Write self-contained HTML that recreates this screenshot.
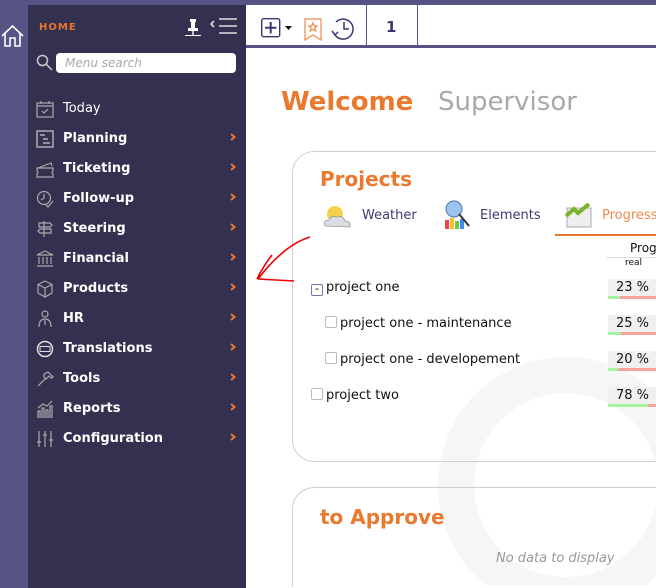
<!DOCTYPE html>
<html><head><meta charset="utf-8">
<style>
*{margin:0;padding:0;box-sizing:border-box}
body{width:656px;height:588px;overflow:hidden;background:#575385;font-family:"DejaVu Sans","Liberation Sans",sans-serif;position:relative}
.strip{position:absolute;left:0;top:0;width:28px;height:588px;background:#575385}
.side{position:absolute;left:28px;top:5px;width:218px;height:583px;background:#33314f}
.main{position:absolute;left:246px;top:5px;width:410px;height:583px;background:#fff;overflow:hidden}
.tb{position:absolute;left:0;top:0;width:410px;height:43px;border-bottom:3px solid #575385;background:#fff}
.item{position:absolute;left:35px;color:#fff;font-weight:bold;font-size:13px;height:20px;line-height:20px}
.item svg{position:absolute;left:-27px;top:1px}
.arr{position:absolute;left:201px;width:8px;height:8px}
.card{position:absolute;border:1px solid #cfcfcf;border-radius:22px;background:transparent}
.h{position:absolute;color:#e8792e;font-weight:bold;font-size:20px}
.row{position:absolute;font-size:13px;color:#111}
.cb{display:inline-block;width:12px;height:12px;border:1px solid #bbb;border-radius:2px;vertical-align:-1px;margin-right:3px}
.pct{position:absolute;left:362px;width:60px;height:20px;background:#f0f0f0;font-size:13px;line-height:18px;padding-left:8px;color:#111}
.pct i{position:absolute;left:0;bottom:0;height:3px;width:100%;background:#f7a3a0}
.pct b{position:absolute;left:0;bottom:0;height:3px;background:#a6f3a0}
</style></head><body>
<div class="strip">
<svg style="position:absolute;left:1px;top:24px" width="24" height="24" viewBox="0 0 24 24" fill="none" stroke="#fff" stroke-width="1.6"><path d="M1 12L11.5 2L22 12M4 9.5V22H9V14H14V22H19V9.5"/></svg>
</div>
<div class="side">
<div style="position:absolute;left:11px;top:17px;color:#e8742e;font-weight:bold;font-size:10px;letter-spacing:1px">HOME</div>
<svg style="position:absolute;left:157px;top:14px" width="16" height="18" viewBox="0 0 16 18" fill="#fff"><rect x="5" y="0" width="6" height="3"/><rect x="6" y="3" width="4" height="6"/><rect x="3" y="9" width="10" height="3"/><rect x="7.3" y="12" width="1.4" height="4"/><rect x="0" y="16" width="16" height="1"/></svg>
<svg style="position:absolute;left:181px;top:12px" width="30" height="20" viewBox="0 0 30 20" fill="none" stroke="#fff" stroke-width="1.3"><path d="M5 4L2 7L5 10M10 2H28M10 9H28M10 16H28"/></svg>
<svg style="position:absolute;left:8px;top:49px" width="18" height="18" viewBox="0 0 18 18" fill="none" stroke="#ccc" stroke-width="1.5"><circle cx="6.5" cy="6.5" r="5"/><path d="M10 10L16 16"/></svg>
<div style="position:absolute;left:28px;top:48px;width:180px;height:20px;background:#fff;border-radius:4px;color:#aaa;font-style:italic;font-size:12px;line-height:21px;padding-left:9px">Menu search</div>

<div class="item" style="top:94px;font-weight:normal"><svg width="18" height="18" viewBox="0 0 18 18" fill="none" stroke="#aaa" stroke-width="1.2"><rect x="1" y="3" width="16" height="14"/><path d="M1 6H17M5 1V4M13 1V4M6 11L8 13L12 9"/></svg>Today</div>
<div class="item" style="top:124px"><svg width="18" height="18" viewBox="0 0 18 18" fill="none" stroke="#ccc" stroke-width="1.2"><rect x="1" y="1" width="16" height="16"/><path d="M4 5H9M7 9H12M7 13H14"/></svg>Planning</div>
<div class="item" style="top:154px"><svg width="18" height="18" viewBox="0 0 18 18" fill="none" stroke="#aaa" stroke-width="1.2"><path d="M1 8H17V11Q15 12.5 17 14V17H1V14Q3 12.5 1 11Z M2 8L15 3L16 6"/></svg>Ticketing</div>
<div class="item" style="top:184px"><svg width="18" height="18" viewBox="0 0 18 18" fill="none" stroke="#aaa" stroke-width="1.2"><circle cx="8" cy="8" r="6.5"/><path d="M8 4V8L5 10M10 15L12 17L17 11"/></svg>Follow-up</div>
<div class="item" style="top:214px"><svg width="18" height="18" viewBox="0 0 18 18" fill="none" stroke="#aaa" stroke-width="1.2"><path d="M8 1V17M3 3H14L16 5L14 7H3ZM15 9H4L2 11L4 13H15Z"/></svg>Steering</div>
<div class="item" style="top:244px"><svg width="18" height="18" viewBox="0 0 18 18" fill="none" stroke="#aaa" stroke-width="1.2"><path d="M1 5L9 1L17 5ZM3 7V14M7 7V14M11 7V14M15 7V14M1 16H17"/></svg>Financial</div>
<div class="item" style="top:274px"><svg width="18" height="18" viewBox="0 0 18 18" fill="none" stroke="#aaa" stroke-width="1.2"><path d="M9 1L16 4.5V13L9 17L2 13V4.5ZM2 4.5L9 8L16 4.5M9 8V17"/></svg>Products</div>
<div class="item" style="top:304px"><svg width="18" height="18" viewBox="0 0 18 18" fill="none" stroke="#aaa" stroke-width="1.2"><circle cx="9" cy="4" r="3"/><path d="M3 17Q3 9 9 9Q15 9 15 17M9 10V15"/></svg>HR</div>
<div class="item" style="top:334px"><svg width="18" height="18" viewBox="0 0 18 18" fill="none" stroke="#ddd" stroke-width="1.5"><circle cx="9" cy="9" r="7.5"/><rect x="4" y="6.5" width="10" height="5" stroke-width="1"/></svg>Translations</div>
<div class="item" style="top:364px"><svg width="18" height="18" viewBox="0 0 18 18" fill="none" stroke="#aaa" stroke-width="1.2"><path d="M2 16L10 8M8 4L12 2L17 7L15 8L13 6L10 9L8 7Z"/></svg>Tools</div>
<div class="item" style="top:394px"><svg width="18" height="18" viewBox="0 0 18 18" fill="none" stroke="#aaa" stroke-width="1.2"><path d="M1 17H17M2 16V11H4V16M6 16V8H8V16M10 16V10H12V16M14 16V6H16V16M2 8L7 4L11 6L16 1"/></svg>Reports</div>
<div class="item" style="top:424px"><svg width="18" height="18" viewBox="0 0 18 18" fill="none" stroke="#aaa" stroke-width="1.2"><path d="M3 1V17M9 1V17M15 1V17M1 12H5M7 5H11M13 10H17"/></svg>Configuration</div>
<svg class="arr" style="top:128px" viewBox="0 0 8 8"><path d="M2 1L5.5 4L2 7" stroke="#e8742e" stroke-width="2" fill="none"/></svg>
<svg class="arr" style="top:158px" viewBox="0 0 8 8"><path d="M2 1L5.5 4L2 7" stroke="#e8742e" stroke-width="2" fill="none"/></svg>
<svg class="arr" style="top:188px" viewBox="0 0 8 8"><path d="M2 1L5.5 4L2 7" stroke="#e8742e" stroke-width="2" fill="none"/></svg>
<svg class="arr" style="top:218px" viewBox="0 0 8 8"><path d="M2 1L5.5 4L2 7" stroke="#e8742e" stroke-width="2" fill="none"/></svg>
<svg class="arr" style="top:248px" viewBox="0 0 8 8"><path d="M2 1L5.5 4L2 7" stroke="#e8742e" stroke-width="2" fill="none"/></svg>
<svg class="arr" style="top:278px" viewBox="0 0 8 8"><path d="M2 1L5.5 4L2 7" stroke="#e8742e" stroke-width="2" fill="none"/></svg>
<svg class="arr" style="top:308px" viewBox="0 0 8 8"><path d="M2 1L5.5 4L2 7" stroke="#e8742e" stroke-width="2" fill="none"/></svg>
<svg class="arr" style="top:338px" viewBox="0 0 8 8"><path d="M2 1L5.5 4L2 7" stroke="#e8742e" stroke-width="2" fill="none"/></svg>
<svg class="arr" style="top:368px" viewBox="0 0 8 8"><path d="M2 1L5.5 4L2 7" stroke="#e8742e" stroke-width="2" fill="none"/></svg>
<svg class="arr" style="top:398px" viewBox="0 0 8 8"><path d="M2 1L5.5 4L2 7" stroke="#e8742e" stroke-width="2" fill="none"/></svg>
<svg class="arr" style="top:428px" viewBox="0 0 8 8"><path d="M2 1L5.5 4L2 7" stroke="#e8742e" stroke-width="2" fill="none"/></svg>
</div>

<div class="main">
<div class="tb">
<svg style="position:absolute;left:15px;top:13px" width="36" height="20" viewBox="0 0 36 20"><rect x="0.7" y="0.7" width="18" height="18" rx="2" fill="none" stroke="#3b3670" stroke-width="1.4"/><path d="M9.7 4V15.4M4 9.7H15.4" stroke="#3b3670" stroke-width="2"/><path d="M24 8H31L27.5 12Z" fill="#111"/></svg>
<svg style="position:absolute;left:58px;top:13px" width="18" height="24" viewBox="0 0 18 24" fill="none" stroke="#f08a4c" stroke-width="1.2"><path d="M1 1H17V22L9 17L1 22Z"/><path d="M9 5L10.3 8H13L11 10L11.8 13L9 11.3L6.2 13L7 10L5 8H7.7Z"/></svg>
<svg style="position:absolute;left:85px;top:11px" width="24" height="26" viewBox="0 0 24 26" fill="none" stroke="#3b3670" stroke-width="1.5"><path d="M4 19A10 10 0 1 0 5 6"/><path d="M1 15L4 19L7 16M13 6V13H18"/></svg>
<div style="position:absolute;left:120px;top:0;width:1px;height:43px;background:#575385"></div>
<div style="position:absolute;left:171px;top:0;width:1px;height:43px;background:#575385"></div>
<div style="position:absolute;left:140px;top:13px;font-weight:bold;font-size:15px;color:#3b3670">1</div>
</div>
<svg style="position:absolute;left:170px;top:330px" width="240" height="250" viewBox="0 0 240 250"><circle cx="150" cy="150" r="110" fill="none" stroke="#f6f6f6" stroke-width="36"/></svg>
<div style="position:absolute;left:35px;top:82px;font-size:26px;font-weight:bold;color:#e8792e">Welcome</div>
<div style="position:absolute;left:192px;top:82px;font-size:26px;color:#a8a8a8">Supervisor</div>

<div class="card" style="left:46px;top:146px;width:420px;height:311px">
<div class="h" style="left:27px;top:15px">Projects</div>
<svg style="position:absolute;left:28px;top:50px" width="32" height="30" viewBox="0 0 32 30"><circle cx="14" cy="12" r="8" fill="#f5d04a"/><path d="M4 24Q2 18 8 18Q10 13 16 15Q22 13 24 19Q30 19 29 25Z" fill="#d8dde4" stroke="#999" stroke-width="0.8"/></svg>
<div style="position:absolute;left:69px;top:56px;font-size:13px;color:#3b3a70">Weather</div>
<svg style="position:absolute;left:150px;top:48px" width="28" height="30" viewBox="0 0 28 30"><circle cx="11" cy="9" r="8" fill="#9cc4ee" stroke="#4778b6"/><rect x="2" y="20" width="4" height="9" fill="#e44"/><rect x="7" y="18" width="4" height="11" fill="#fb3"/><rect x="12" y="21" width="4" height="8" fill="#6c4"/><rect x="17" y="19" width="4" height="10" fill="#48e"/><path d="M16 14L26 26" stroke="#333" stroke-width="2"/></svg>
<div style="position:absolute;left:187px;top:56px;font-size:13px;color:#3b3a70">Elements</div>
<svg style="position:absolute;left:272px;top:48px" width="28" height="28" viewBox="0 0 28 28"><rect x="2" y="8" width="24" height="19" fill="#eee" stroke="#aaa"/><path d="M1 16L9 9L13 13L24 4" stroke="#7ab22a" stroke-width="4" fill="none"/></svg>
<div style="position:absolute;left:309px;top:56px;font-size:13px;color:#f08a4c">Progress</div>
<div style="position:absolute;left:262px;top:82px;width:160px;height:2px;background:#e8792e"></div>
<div style="position:absolute;left:337px;top:89px;font-size:12px;color:#111">Prog</div>
<div style="position:absolute;left:313px;top:105px;width:110px;height:1px;background:#ddd"></div>
<div style="position:absolute;left:332px;top:106px;font-size:9px;color:#111">real</div>
<div class="row" style="left:18px;top:128px"><span class="cb" style="border-color:#77a;text-align:center;line-height:8px;font-size:11px">-</span>project one</div>
<div class="row" style="left:32px;top:164px"><span class="cb"></span>project one - maintenance</div>
<div class="row" style="left:32px;top:200px"><span class="cb"></span>project one - developement</div>
<div class="row" style="left:18px;top:236px"><span class="cb"></span>project two</div>
<div class="pct" style="left:315px;top:127px">23 %<i></i><b style="width:12px"></b></div>
<div class="pct" style="left:315px;top:163px">25 %<i></i><b style="width:13px"></b></div>
<div class="pct" style="left:315px;top:199px">20 %<i></i><b style="width:10px"></b></div>
<div class="pct" style="left:315px;top:235px">78 %<i></i><b style="width:40px"></b></div>
</div>

<div class="card" style="left:46px;top:482px;width:420px;height:100px;border-bottom:none;border-bottom-left-radius:0;border-bottom-right-radius:0">
<div class="h" style="left:27px;top:17px">to Approve</div>
<div style="position:absolute;left:203px;top:63px;font-size:13px;font-style:italic;color:#999">No data to display</div>
</div>

<svg style="position:absolute;left:8px;top:230px" width="60" height="50" viewBox="0 0 60 50" fill="none" stroke="#e00" stroke-width="1.6"><path d="M56 2Q30 10 4 44M18 20Q10 30 3 44M4 44L40 46"/></svg>
</div>
</body></html>
